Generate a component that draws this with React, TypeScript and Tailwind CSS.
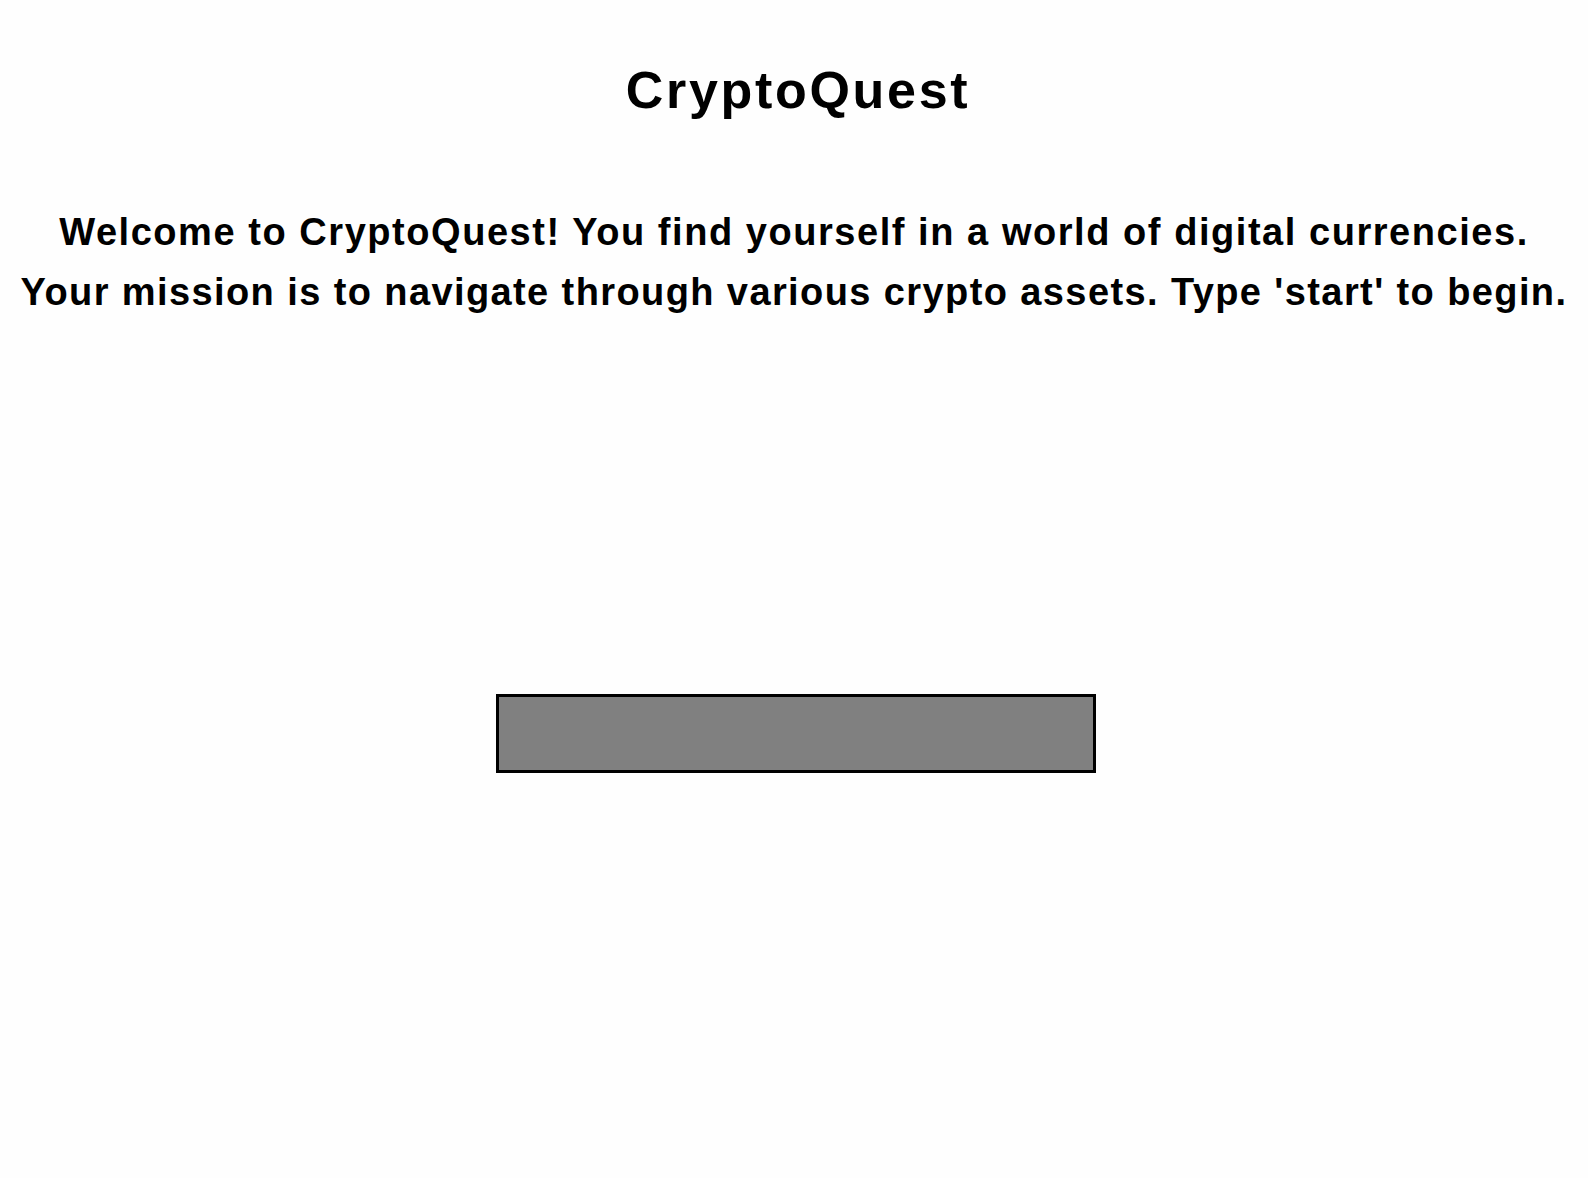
export default function App() {
  return (
    <div className="flex min-h-screen flex-col items-center bg-[#fefefe] text-black font-['Liberation_Sans',Arial,sans-serif]">
      <h1 className="ml-[8px] mt-[58px] text-[52px] font-bold leading-[64px] tracking-[2.7px]">CryptoQuest</h1>
      <div className="mt-[80px] text-center text-[38px] font-bold leading-[60px]">
        <p className="tracking-[1.55px]">Welcome to CryptoQuest! You find yourself in a world of digital currencies.</p>
        <p className="tracking-[1.4px]">Your mission is to navigate through various crypto assets. Type 'start' to begin.</p>
      </div>
      <div className="ml-[4px] mt-[372px] h-[79px] w-[600px] border-[3px] border-black bg-[#808080]" />
    </div>
  );
}
